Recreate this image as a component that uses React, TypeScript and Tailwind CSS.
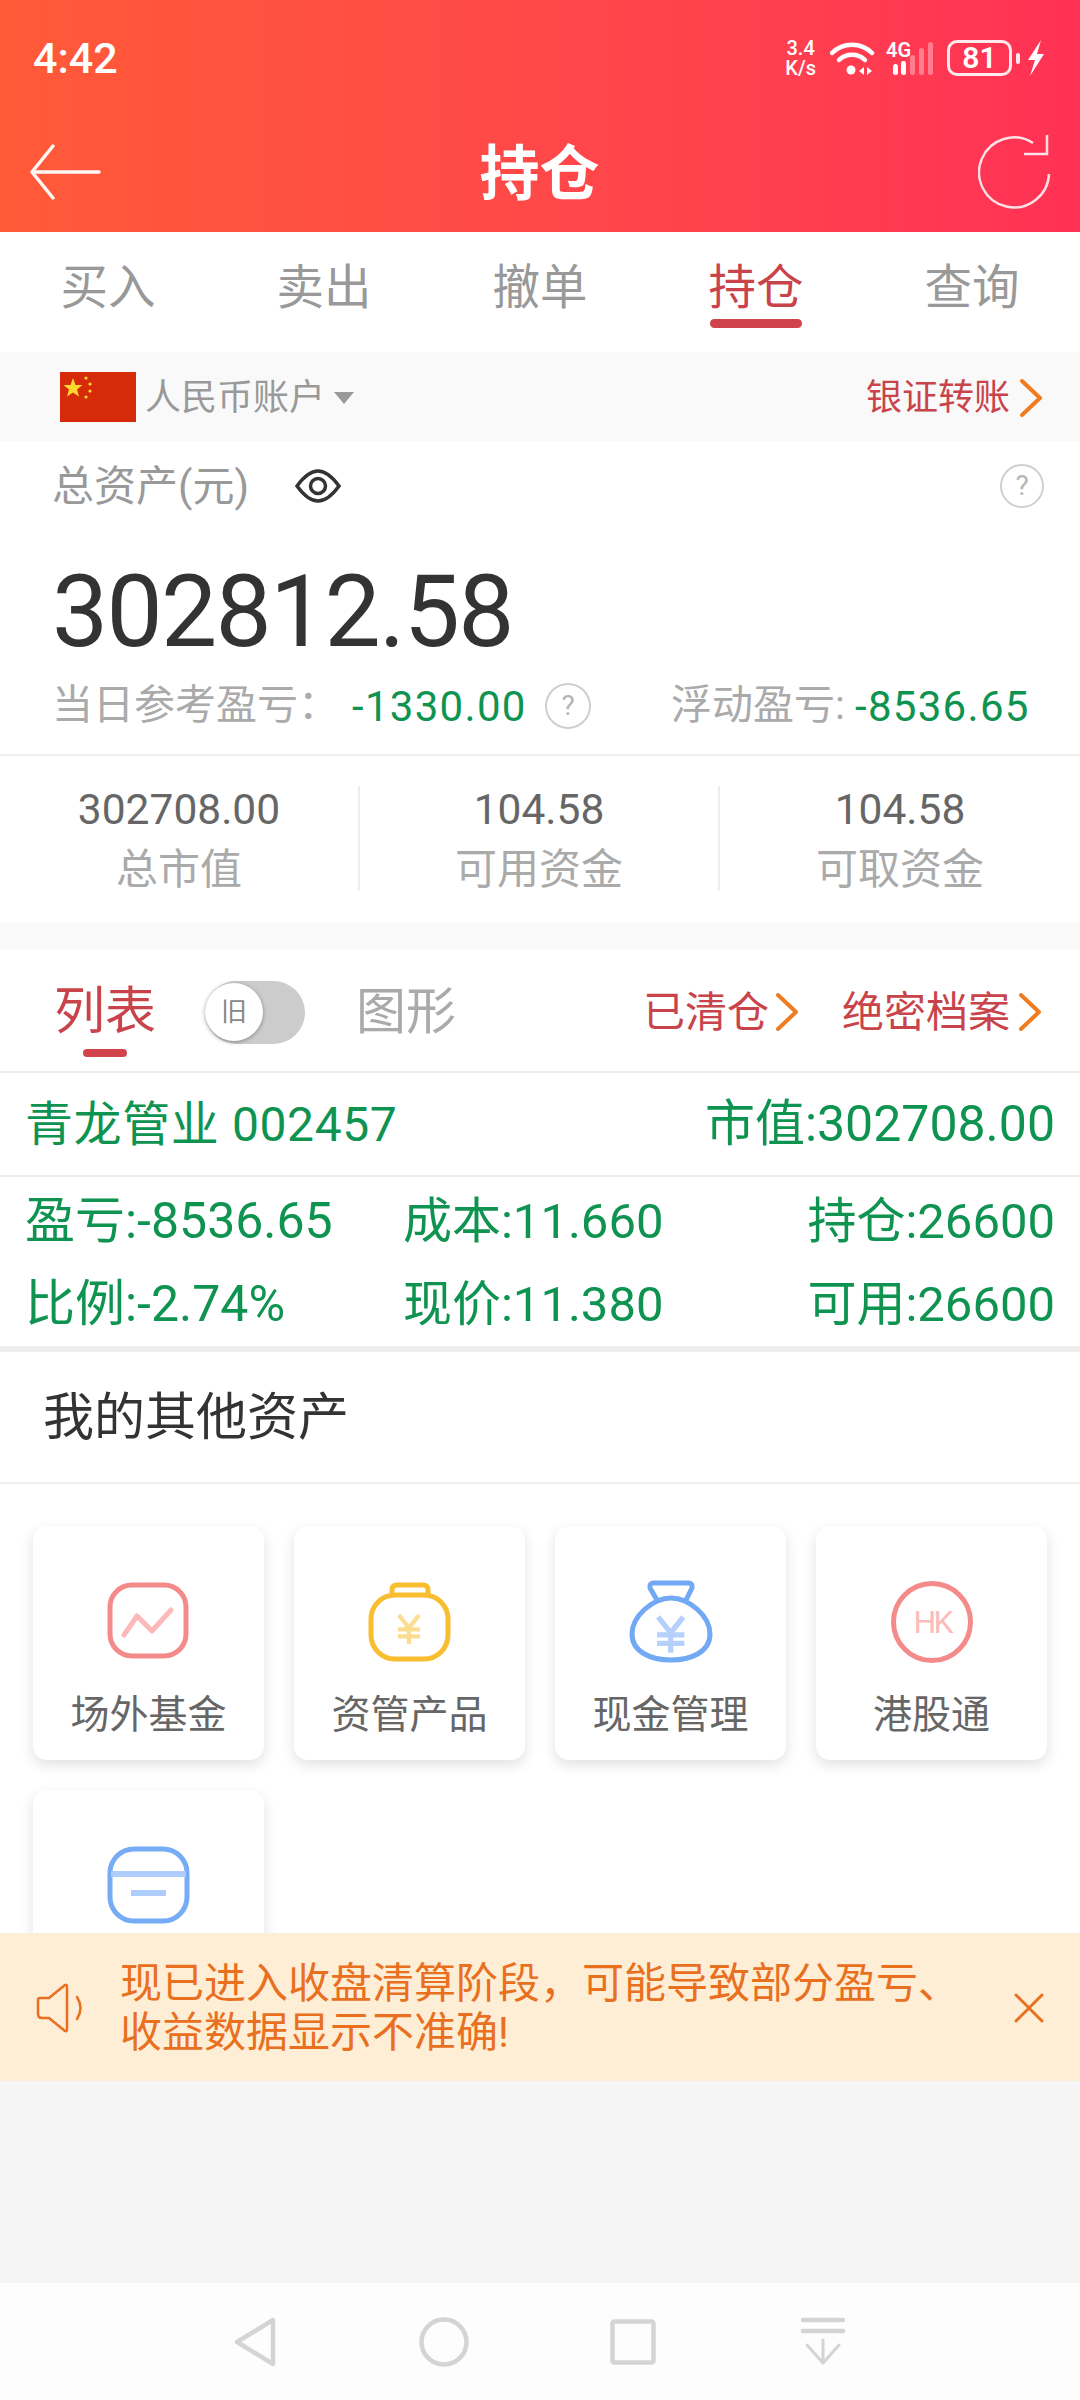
import React from "react";

const Chevron = ({ className = "" }: { className?: string }) => (
  <svg width="24" height="38" viewBox="0 0 24 38" fill="none" className={className}>
    <path d="M3 2 L21 19 L3 36" stroke="#f07c22" strokeWidth="4" strokeLinecap="round" strokeLinejoin="round" />
  </svg>
);

const Help = ({ size = 44 }: { size?: number }) => (
  <span
    className="flex items-center justify-center rounded-full border-2 border-[#cfcfcf] text-[#b5b5b5] text-[28px] leading-none shrink-0"
    style={{ width: size, height: size }}
  >
    ?
  </span>
);

const Yen = ({ x, y, s, color }: { x: number; y: number; s: number; color: string }) => (
  <g transform={`translate(${x} ${y}) scale(${s})`} stroke={color} strokeWidth="5" fill="none">
    <path d="M2 0 L14 15 L26 0 M14 15 V34 M1 17 H27 M1 25 H27" />
  </g>
);

const icons: Record<string, React.ReactNode> = {
  fund: (
    <svg width="84" height="80" viewBox="0 0 84 80" fill="none">
      <rect x="3" y="3" width="76" height="71" rx="22" stroke="#f48a8a" strokeWidth="5" />
      <path d="M17 53 L30 34 L45 49 L64 28" stroke="#fcb9b9" strokeWidth="5" strokeLinecap="round" strokeLinejoin="round" />
    </svg>
  ),
  asset: (
    <svg width="84" height="80" viewBox="0 0 84 80" fill="none">
      <path d="M24 12 V8 Q24 3 29 3 H55 Q60 3 60 8 V12" stroke="#f9be2f" strokeWidth="5" />
      <rect x="3" y="13" width="77" height="64" rx="24" stroke="#f9be2f" strokeWidth="5" />
      <Yen x={29} y={33} s={0.85} color="#fbdc90" />
    </svg>
  ),
  cash: (
    <svg width="84" height="84" viewBox="0 0 84 84" fill="none">
      <path d="M28 20 L21 8 Q20 3 25 3 H59 Q64 3 63 8 L57 20" stroke="#72a9f5" strokeWidth="5" strokeLinejoin="round" />
      <path d="M42 18 C60 18 81 36 81 54 C81 72 62 80 42 80 C22 80 3 72 3 54 C3 36 24 18 42 18 Z" stroke="#72a9f5" strokeWidth="5" />
      <Yen x={27} y={37} s={1.05} color="#b5d1fb" />
    </svg>
  ),
  hk: (
    <svg width="84" height="84" viewBox="0 0 84 84" fill="none">
      <circle cx="42" cy="42" r="38.5" stroke="#f48a8a" strokeWidth="5" />
      <text x="42" y="53" textAnchor="middle" fontFamily="Roboto, sans-serif" fontSize="32" letterSpacing="-3" fill="#fcbcbc">
        HK
      </text>
    </svg>
  ),
  card: (
    <svg width="84" height="80" viewBox="0 0 84 80" fill="none">
      <rect x="3" y="3" width="77" height="72" rx="24" stroke="#76abf6" strokeWidth="5" />
      <path d="M4 28 H79" stroke="#afcdfb" strokeWidth="6" />
      <path d="M24 47 H59" stroke="#afcdfb" strokeWidth="6" />
    </svg>
  ),
};

const Card = ({ icon, label }: { icon: string; label?: string }) => (
  <div className="h-[234px] rounded-[14px] bg-white shadow-[0_5px_14px_rgba(0,0,0,0.12)] flex flex-col items-center">
    <div className="mt-[55px] h-[82px] flex items-center justify-center">{icons[icon]}</div>
    {label && <div className="mt-[29px] h-[46px] leading-[46px] text-[39px] text-[#666666]">{label}</div>}
  </div>
);

export default function App() {
  return (
    <div className="w-[1080px] h-[2400px] flex flex-col overflow-hidden bg-[#f5f5f5] font-['Roboto','Noto_Sans_CJK_SC',sans-serif]">
      {/* header */}
      <header className="h-[232px] shrink-0 bg-linear-to-r from-[#ff5a38] to-[#ff3155] text-white">
        <div className="h-[116px] pl-[33px] pr-[35px] flex items-center">
          <span className="text-[43px] font-medium leading-none">4:42</span>
          <div className="ml-auto flex items-center">
            <div className="flex flex-col items-center text-[20px] leading-[20px] font-medium">
              <span>3.4</span>
              <span>K/s</span>
            </div>
            <svg width="46" height="34" viewBox="0 0 46 34" fill="none" className="ml-[14px]">
              <path d="M2 12 C13 1 31 1 42 12" stroke="white" strokeWidth="4.5" strokeLinecap="round" />
              <path d="M9 19 C16 12 28 12 35 19" stroke="white" strokeWidth="4.5" strokeLinecap="round" />
              <circle cx="21" cy="29" r="4.5" fill="white" />
              <path d="M34 26 L29 30 L34 34 Z M37 26 L42 30 L37 34 Z" fill="white" />
            </svg>
            <div className="relative w-[52px] h-[34px] ml-[10px]">
              <span className="absolute left-0 -top-[1px] text-[20px] leading-[20px] font-semibold">4G</span>
              <svg width="52" height="34" viewBox="0 0 52 34" className="absolute inset-0">
                <rect x="7" y="23" width="5" height="11" rx="2.5" fill="white" />
                <rect x="15" y="20" width="5" height="14" rx="2.5" fill="white" />
                <rect x="24" y="14" width="5" height="20" rx="2.5" fill="white" fillOpacity="0.35" />
                <rect x="33" y="7" width="5" height="27" rx="2.5" fill="white" fillOpacity="0.35" />
                <rect x="42" y="1" width="5" height="33" rx="2.5" fill="white" fillOpacity="0.35" />
              </svg>
            </div>
            <div className="ml-[9px] w-[65px] h-[36px] rounded-[10px] border-[3px] border-white/90 flex items-center justify-center text-[30px] leading-none font-semibold">
              81
            </div>
            <div className="ml-[4px] w-[4px] h-[11px] rounded-[2px] bg-white/90" />
            <svg width="18" height="36" viewBox="0 0 18 36" className="ml-[7px]">
              <path d="M14 0 L1 20 L8 20 L3 36 L17 14 L10 14 Z" fill="white" />
            </svg>
          </div>
        </div>
        <div className="h-[116px] pl-[29px] pr-[26px] flex items-center justify-between -mt-[2px]">
          <svg width="72" height="56" viewBox="0 0 72 56" fill="none">
            <path d="M70 28 H3 M24 2 L3 28 L24 54" stroke="white" strokeOpacity="0.95" strokeWidth="3.5" strokeLinecap="round" strokeLinejoin="round" />
          </svg>
          <span className="text-[60px] leading-none font-bold pt-[5px]">持仓</span>
          <svg width="76" height="76" viewBox="0 0 76 76" fill="none">
            <path d="M71 40 A35 35 0 1 1 55 9" stroke="white" strokeOpacity="0.85" strokeWidth="2.5" />
            <path d="M69 1 V20 H46" stroke="white" strokeOpacity="0.85" strokeWidth="2.5" />
          </svg>
        </div>
      </header>

      <main className="h-[1701px] shrink-0 overflow-hidden bg-white">
        {/* tabs */}
        <nav className="h-[120px] grid grid-cols-5 text-[47.5px] text-[#999999]">
          {["买入", "卖出", "撤单", "持仓", "查询"].map((t) => (
            <div key={t} className="relative flex items-center justify-center pb-[6px]">
              <span className={t === "持仓" ? "text-[#c9444a]" : ""}>{t}</span>
              {t === "持仓" && (
                <span className="absolute left-[62px] bottom-[24px] w-[92px] h-[9px] rounded-full bg-[#d0434a]" />
              )}
            </div>
          ))}
        </nav>

        {/* account bar */}
        <div className="h-[89px] bg-[#f9f9f9] pl-[60px] pr-[37px] flex items-center pt-[2px]">
          <svg width="76" height="50" viewBox="0 0 76 50" className="-mt-[2px]">
            <rect width="76" height="50" fill="#d62b0a" />
            <path d="M13 6 L15.5 13 L22.5 13 L17 17.5 L19 24.5 L13 20.5 L7 24.5 L9 17.5 L3.5 13 L10.5 13 Z" fill="#ffd92e" />
            <circle cx="26" cy="6" r="1.6" fill="#ffd92e" />
            <circle cx="30" cy="12" r="1.6" fill="#ffd92e" />
            <circle cx="30" cy="19" r="1.6" fill="#ffd92e" />
            <circle cx="26" cy="25" r="1.6" fill="#ffd92e" />
          </svg>
          <span className="ml-[9px] text-[36px] text-[#999999]">人民币账户</span>
          <span className="ml-[9px] w-0 h-0 border-x-[10px] border-x-transparent border-t-[12px] border-t-[#999999]" />
          <span className="ml-auto text-[36px] text-[#c9444a]">银证转账</span>
          <Chevron className="ml-[9px]" />
        </div>

        {/* total assets */}
        <section className="h-[315px] border-b-2 border-[#eeeeee] pl-[52px] pr-[36px]">
          <div className="h-[90px] flex items-center">
            <span className="text-[42px] text-[#999999]">总资产(元)</span>
            <svg width="46" height="34" viewBox="0 0 46 34" fill="none" className="ml-[46px]">
              <path d="M2 17 C10 6 16 2 23 2 C30 2 36 6 44 17 C36 28 30 32 23 32 C16 32 10 28 2 17 Z" stroke="#333333" strokeWidth="3.5" />
              <circle cx="23" cy="17" r="7.5" stroke="#333333" strokeWidth="3.5" />
            </svg>
            <span className="ml-auto">
              <Help />
            </span>
          </div>
          <div className="mt-[31px] h-[100px] leading-[100px] text-[100px] text-[#333333] tracking-[-1.7px]">302812.58</div>
          <div className="mt-[14px] h-[60px] flex items-center text-[41px] text-[#aaaaaa]">
            <span className="w-[300px] shrink-0 whitespace-nowrap">当日参考盈亏：</span>
            <span className="w-[174px] shrink-0 text-[42px] tracking-[1.3px] text-[#0f9350]">-1330.00</span>
            <span className="ml-[19px]">
              <Help size={46} />
            </span>
            <span className="ml-[80px] w-[184px] shrink-0 whitespace-nowrap">浮动盈亏:</span>
            <span className="text-[42px] tracking-[1.3px] text-[#0f9350]">-8536.65</span>
          </div>
        </section>

        {/* stats */}
        <section className="h-[166px] grid grid-cols-3 pt-[30px] items-start">
          {[
            ["302708.00", "总市值"],
            ["104.58", "可用资金"],
            ["104.58", "可取资金"],
          ].map(([v, l], i) => (
            <div key={i} className={`h-[105px] flex flex-col items-center ${i < 2 ? "border-r-2 border-[#eeeeee]" : ""}`}>
              <span className="mt-[1px] h-[46px] leading-[46px] text-[42.5px] text-[#666666]">{v}</span>
              <span className="mt-[14px] h-[46px] leading-[46px] text-[42px] text-[#aaaaaa]">{l}</span>
            </div>
          ))}
        </section>
        <div className="h-[28px] bg-[#f9f9f9]" />

        {/* list header */}
        <div className="h-[123px] border-b-2 border-[#eeeeee] pl-[54px] pr-[38px] pt-[3px] flex items-center">
          <span className="relative text-[51px] text-[#c9444a]">
            列表
            <span className="absolute left-[29px] -bottom-[7px] w-[44px] h-[8px] rounded-full bg-[#d0434a]" />
          </span>
          <div className="ml-[49px] w-[100px] h-[63px] rounded-full bg-[#cccccc] flex items-center">
            <span className="w-[58px] h-[58px] rounded-full bg-white shadow-[0_1px_4px_rgba(0,0,0,0.35)] flex items-center justify-center text-[26px] text-[#888888]">
              旧
            </span>
          </div>
          <span className="ml-[51px] text-[50px] text-[#aaaaaa]">图形</span>
          <span className="ml-auto text-[42px] text-[#c9444a]">已清仓</span>
          <Chevron className="ml-[6px]" />
          <span className="ml-[43px] text-[42px] text-[#c9444a]">绝密档案</span>
          <Chevron className="ml-[8px]" />
        </div>

        {/* position */}
        <div className="text-[50px] text-[#0f9350]">
          <div className="h-[104px] border-b-2 border-[#eeeeee] pl-[25px] pr-[25px] pt-[1px] flex items-center justify-between">
            <span className="text-[48px] tracking-[0.6px]">青龙管业 002457</span>
            <span>市值:302708.00</span>
          </div>
          <div className="border-b-[6px] border-[#eeeeee] pt-[3px] px-[25px] grid grid-cols-[378px_1fr_auto] auto-rows-[83px] items-center">
            <span>盈亏:-8536.65</span>
            <span className="text-[49px]">成本:11.660</span>
            <span className="text-[49px]">持仓:26600</span>
            <span>比例:-2.74%</span>
            <span className="text-[49px]">现价:11.380</span>
            <span className="text-[49px]">可用:26600</span>
          </div>
        </div>

        {/* other assets */}
        <div className="h-[132px] border-b-2 border-[#eeeeee] pl-[43px] pt-[3px] flex items-center text-[51px] text-[#333333]">我的其他资产</div>
        <div className="pt-[42px] px-[33px] grid grid-cols-4 gap-[30px]">
          <Card icon="fund" label="场外基金" />
          <Card icon="asset" label="资管产品" />
          <Card icon="cash" label="现金管理" />
          <Card icon="hk" label="港股通" />
          <Card icon="card" />
        </div>
      </main>

      {/* notice */}
      <div className="h-[148px] shrink-0 bg-[#ffeed6] pl-[36px] pr-[36px] pt-[2px] flex items-center">
        <svg width="50" height="50" viewBox="0 0 50 50" fill="none" className="shrink-0">
          <path d="M2 17 Q2 15 4 15 H13 L29 2 Q31 1 31 4 V46 Q31 49 29 48 L13 35 H6 Q2 35 2 31 Z" stroke="#e8701e" strokeWidth="2.5" strokeLinejoin="round" />
          <path d="M41 14 Q48 25 41 36" stroke="#e8701e" strokeWidth="2.5" strokeLinecap="round" />
        </svg>
        <p className="ml-[34px] text-[42px] leading-[49px] text-[#e8701e]">
          现已进入收盘清算阶段，可能导致部分盈亏、
          <br />
          收益数据显示不准确!
        </p>
        <svg width="30" height="30" viewBox="0 0 30 30" fill="none" className="ml-auto shrink-0">
          <path d="M2 2 L28 28 M28 2 L2 28" stroke="#e8701e" strokeWidth="3" strokeLinecap="round" />
        </svg>
      </div>

      <div className="flex-1 bg-[#f5f5f5]" />

      {/* nav bar */}
      <div className="h-[117px] shrink-0 bg-[#fdfdfd] pt-[34px] pl-[234px] flex items-start">
        <svg width="42" height="50" viewBox="0 0 42 50" fill="none">
          <path d="M39 3 V47 L3 25 Z" stroke="#d4d4d4" strokeWidth="4.5" strokeLinejoin="round" />
        </svg>
        <svg width="50" height="50" viewBox="0 0 50 50" fill="none" className="ml-[143px]">
          <circle cx="25" cy="25" r="22.5" stroke="#d4d4d4" strokeWidth="4.5" />
        </svg>
        <svg width="46" height="46" viewBox="0 0 46 46" fill="none" className="ml-[141px] mt-[2px]">
          <rect x="2.5" y="2.5" width="41" height="41" rx="2" stroke="#d4d4d4" strokeWidth="4.5" />
        </svg>
        <svg width="44" height="48" viewBox="0 0 44 48" fill="none" className="ml-[145px]">
          <path d="M2 3 H42 M2 14 H42" stroke="#d4d4d4" strokeWidth="4.5" strokeLinecap="round" />
          <path d="M22 23 V46 M6 28 L22 46 L38 28" stroke="#d4d4d4" strokeWidth="3" strokeLinecap="round" strokeLinejoin="round" />
        </svg>
      </div>
    </div>
  );
}
